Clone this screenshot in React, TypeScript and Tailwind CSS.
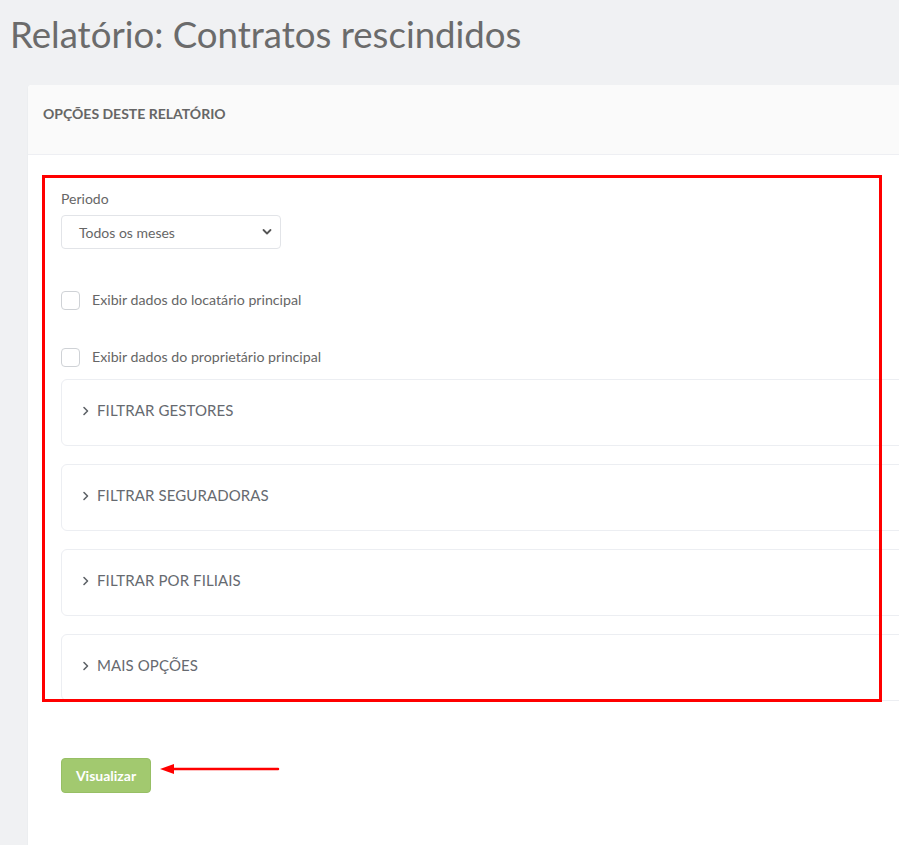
import React from "react";

function Chevron() {
  return (
    <svg width="8" height="10" viewBox="0 0 8 10" fill="none" className="mr-[7px]">
      <path d="M2 1.5 L5.5 5 L2 8.5" stroke="#5f6368" strokeWidth="1.6" strokeLinecap="round" strokeLinejoin="round" />
    </svg>
  );
}

function Accordion({ title }: { title: string }) {
  return (
    <div className="h-[67px] border border-[#eceef2] rounded-[6px] flex items-center pl-[20px] pb-[4px] bg-white">
      <Chevron />
      <span className="text-[15px] text-[#666a70] tracking-[0.1px]">{title}</span>
    </div>
  );
}

export default function App() {
  return (
    <div
      className="w-[899px] h-[845px] overflow-hidden bg-[#f0f1f3] relative"
      style={{ fontFamily: "Lato, 'Open Sans', sans-serif" }}
    >
      <h1 className="text-[36.6px] leading-[44px] text-[#6b6b6b] pl-[10px] pt-[12px] h-[85px] font-normal">
        Relatório: Contratos rescindidos
      </h1>
      <div className="ml-[27px] w-[920px] h-[780px] bg-white rounded-tl-[4px] border-l border-[#eceef0]">
        <div className="h-[70px] bg-[#fafafa] border-b border-[#eeeff3] pl-[15px] pt-[16px] rounded-tl-[4px]">
          <span className="text-[14px] font-bold text-[#666] leading-[20px]">OPÇÕES DESTE RELATÓRIO</span>
        </div>
        <div className="pl-[33px] pt-[34px]">
          <div className="text-[14px] text-[#666] leading-[20px]">Periodo</div>
          <div className="mt-[6px] w-[220px] h-[34px] border border-[#e2e4e8] rounded-[4px] flex items-center justify-between pl-[17px] pr-[8px]">
            <span className="text-[14px] text-[#666]">Todos os meses</span>
            <svg width="10" height="8" viewBox="0 0 10 8" fill="none">
              <path d="M1.5 2 L5 5.5 L8.5 2" stroke="#555" strokeWidth="1.8" strokeLinecap="round" strokeLinejoin="round" />
            </svg>
          </div>
          <div className="mt-[41px] flex items-center h-[20px]">
            <div className="w-[19px] h-[19px] border border-[#cfd2d6] rounded-[4px] bg-white" />
            <span className="ml-[12px] text-[14.2px] text-[#666]">Exibir dados do locatário principal</span>
          </div>
          <div className="mt-[37px] flex items-center h-[20px]">
            <div className="w-[19px] h-[19px] border border-[#cfd2d6] rounded-[4px] bg-white" />
            <span className="ml-[12px] text-[14.2px] text-[#666]">Exibir dados do proprietário principal</span>
          </div>
          <div className="mt-[12px] flex flex-col gap-[18px]">
            <Accordion title="FILTRAR GESTORES" />
            <Accordion title="FILTRAR SEGURADORAS" />
            <Accordion title="FILTRAR POR FILIAIS" />
            <Accordion title="MAIS OPÇÕES" />
          </div>
          <div className="mt-[57px] flex items-center">
            <button className="w-[90px] h-[35px] bg-[#a2c96f] border border-[#97bf65] rounded-[4px] text-white text-[14px] font-bold">
              Visualizar
            </button>
          </div>
        </div>
      </div>
      {/* annotation overlay */}
      <div className="absolute left-[42px] top-[175px] w-[840px] h-[527px] border-[3px] border-[#ff0000] pointer-events-none" />
      <svg className="absolute left-[158px] top-[762px]" width="124" height="14" viewBox="0 0 124 14">
        <line x1="14" y1="7" x2="120" y2="7" stroke="#ff0000" strokeWidth="2.5" strokeLinecap="round" />
        <polygon points="2,7 16,2 16,12" fill="#ff0000" />
      </svg>
    </div>
  );
}
